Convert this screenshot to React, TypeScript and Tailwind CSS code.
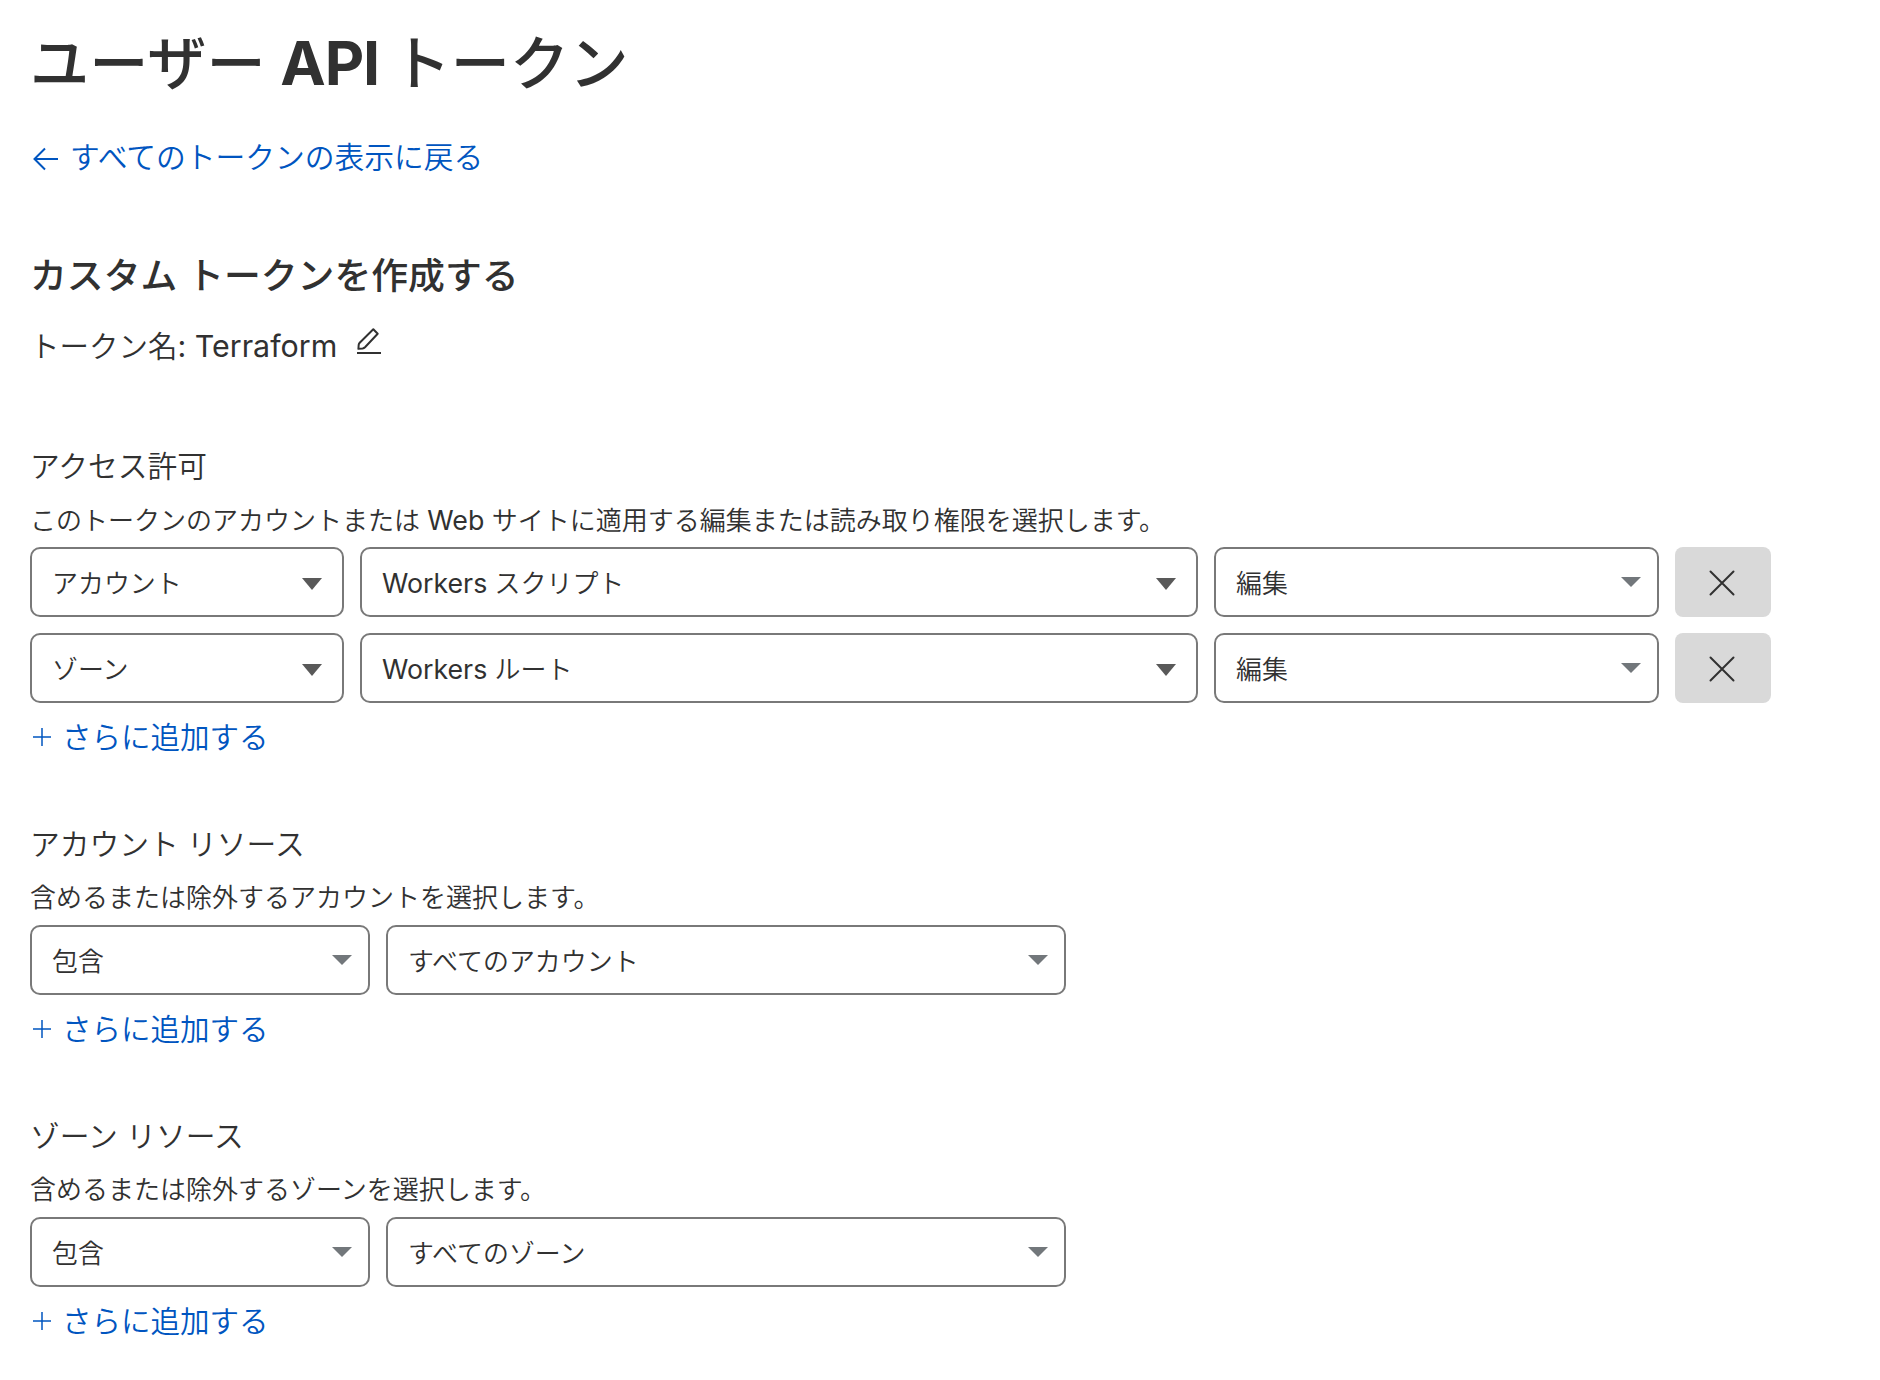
import React from "react";

function Latin({ children }: { children: React.ReactNode }) {
  return <span className="text-[1.03em] font-normal">{children}</span>;
}

function Caret({ dark }: { dark?: boolean }) {
  return dark ? (
    <svg width="20" height="12" viewBox="0 0 20 12" className="mt-1 mr-5 shrink-0">
      <path d="M0 0H20L10 12Z" fill="#595959" />
    </svg>
  ) : (
    <svg width="20" height="10" viewBox="0 0 20 10" className="mr-4 shrink-0">
      <path d="M0 0H20L10 10Z" fill="#72777b" />
    </svg>
  );
}

function Select({ label, width, dark }: { label: React.ReactNode; width: string; dark?: boolean }) {
  return (
    <button
      type="button"
      className={`flex h-[70px] items-center justify-between rounded-[10px] border-2 border-[#797979] bg-white pl-5 text-left text-[25.95px] leading-[26px] ${width}`}
    >
      <span className="pt-[3px] whitespace-nowrap">{label}</span>
      <Caret dark={dark} />
    </button>
  );
}

function RemoveButton() {
  return (
    <button type="button" aria-label="削除" className="flex h-[70px] w-24 items-center justify-center rounded-lg bg-[#d9d9d9]">
      <svg width="26" height="26" viewBox="0 0 26 26" fill="none" stroke="#313131" strokeWidth="2" strokeLinecap="round" className="mt-0.5 mr-0.5">
        <path d="M1.5 1.5L24.5 24.5M24.5 1.5L1.5 24.5" />
      </svg>
    </button>
  );
}

function AddMore() {
  return (
    <a href="#" className="mt-[14px] mb-px flex h-10 items-center pl-[3px] text-[29.5px] leading-10 text-[#0055c0]">
      <svg width="18" height="18" viewBox="0 0 18 18" fill="none" stroke="#0055c0" strokeWidth="1.5" className="mr-[11px]">
        <path d="M9 0V18M0 9H18" />
      </svg>
      さらに追加する
    </a>
  );
}

function Section({ title, description, children }: { title: string; description: React.ReactNode; children: React.ReactNode }) {
  return (
    <section>
      <h3 className="h-10 text-[29.75px] leading-10 font-[350]">{title}</h3>
      <p className="mt-[18px] h-8 text-[26px] leading-8">{description}</p>
      <div className="mt-[11px] flex flex-col gap-4">{children}</div>
      <AddMore />
    </section>
  );
}

export default function App() {
  return (
    <main
      lang="ja"
      className="h-[1380px] w-[1880px] overflow-hidden bg-white px-[30px] pt-[23px] font-['Inter','Noto_Sans_CJK_JP',sans-serif] font-[350] text-[#313131]"
    >
      <h1 className="h-20 text-[59.2px] leading-[80px] font-medium">
        ユーザー <span className="-mr-[3px] -ml-px text-[1.03em] font-[650] tracking-[-1.2px]">API</span> トークン
      </h1>
      <a href="#" className="mt-[34px] flex h-10 items-center pl-[3px] text-[29.75px] leading-10 text-[#0055c0]">
        <svg width="25" height="24" viewBox="0 0 25 24" fill="none" stroke="#0055c0" strokeWidth="2" className="mt-1 mr-3">
          <path d="M12 1.5L1.5 12L12 22.5M1.5 12H25" />
        </svg>
        すべてのトークンの表示に戻る
      </a>
      <h2 className="mt-[75px] h-12 text-[36.85px] leading-[48px] font-medium">カスタム トークンを作成する</h2>
      <div className="mt-[26px] flex h-10 text-[29.5px] leading-10">
        <span>
          トークン名<Latin>: Terraform</Latin>
        </span>
        <svg width="26" height="28" viewBox="0 0 26 28" fill="none" stroke="#313131" strokeWidth="2" className="ml-[19px]">
          <path d="M1 27H25" />
          <path d="M17.3 3.2L21.7 7.8L9 21.2Q8 22.2 6.6 22.4L2.4 22.8L2.7 18.8Q2.8 17.6 3.7 16.7Z" strokeLinejoin="round" />
        </svg>
      </div>
      <div className="mt-20 flex flex-col gap-[66px]">
        <Section
          title="アクセス許可"
          description={
            <>
              このトークンのアカウントまたは <Latin>Web</Latin> サイトに適用する編集または読み取り権限を選択します。
            </>
          }
        >
          <div className="flex gap-4">
            <Select label="アカウント" width="w-[314px]" dark />
            <Select label={<><Latin>Workers</Latin> スクリプト</>} width="w-[838px]" dark />
            <Select label="編集" width="w-[445px]" />
            <RemoveButton />
          </div>
          <div className="flex gap-4">
            <Select label="ゾーン" width="w-[314px]" dark />
            <Select label={<><Latin>Workers</Latin> ルート</>} width="w-[838px]" dark />
            <Select label="編集" width="w-[445px]" />
            <RemoveButton />
          </div>
        </Section>
        <Section title="アカウント リソース" description="含めるまたは除外するアカウントを選択します。">
          <div className="flex gap-4">
            <Select label="包含" width="w-[340px]" />
            <Select label="すべてのアカウント" width="w-[680px]" />
          </div>
        </Section>
        <Section title="ゾーン リソース" description="含めるまたは除外するゾーンを選択します。">
          <div className="flex gap-4">
            <Select label="包含" width="w-[340px]" />
            <Select label="すべてのゾーン" width="w-[680px]" />
          </div>
        </Section>
      </div>
    </main>
  );
}
